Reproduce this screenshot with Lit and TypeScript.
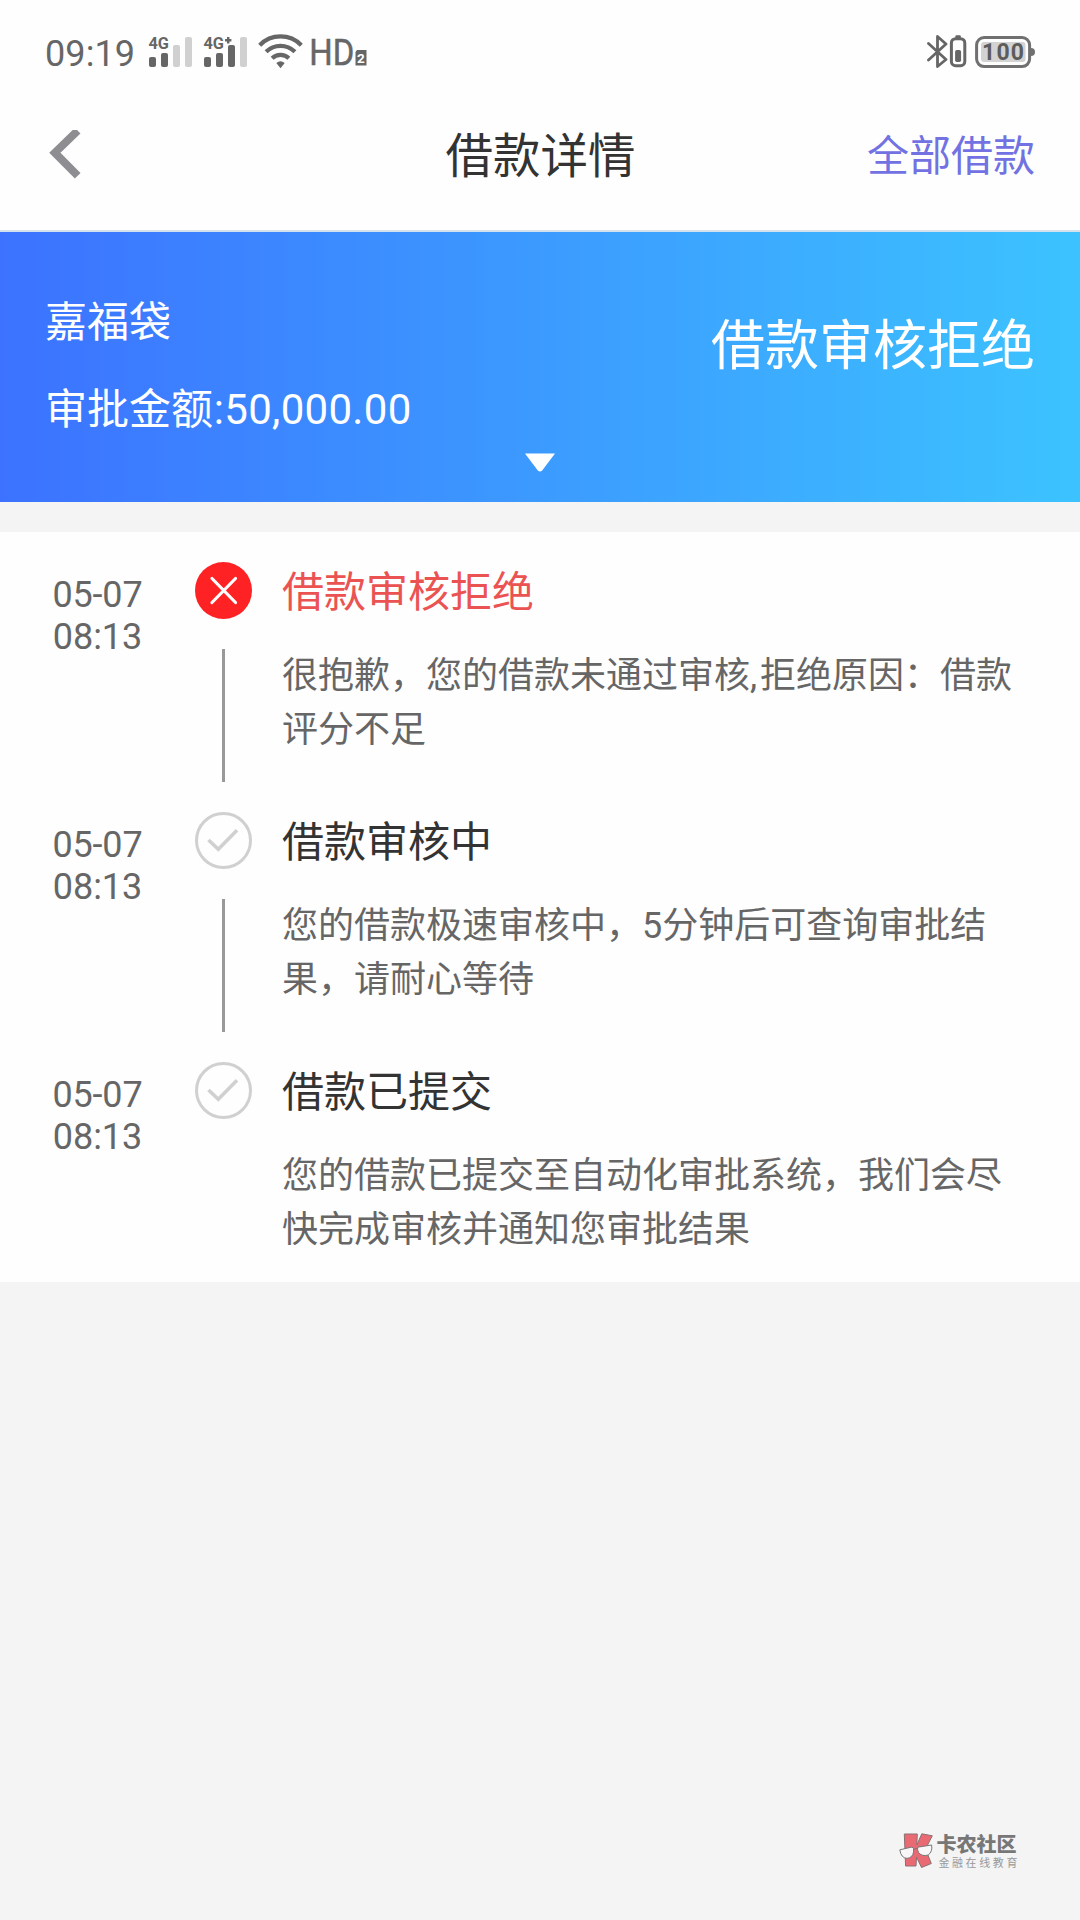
import { LitElement, html, css, svg } from "lit";
import { customElement, property } from "lit/decorators.js";
import { classMap } from "lit/directives/class-map.js";

interface Step {
  date: string;
  time: string;
  title: string;
  detail: string;
  rejected: boolean;
}

const STEPS: Step[] = [
  {
    date: "05-07",
    time: "08:13",
    title: "借款审核拒绝",
    detail: "很抱歉，您的借款未通过审核,拒绝原因：借款评分不足",
    rejected: true,
  },
  {
    date: "05-07",
    time: "08:13",
    title: "借款审核中",
    detail: "您的借款极速审核中，5分钟后可查询审批结果，请耐心等待",
    rejected: false,
  },
  {
    date: "05-07",
    time: "08:13",
    title: "借款已提交",
    detail: "您的借款已提交至自动化审批系统，我们会尽快完成审核并通知您审批结果",
    rejected: false,
  },
];

@customElement("status-bar")
export class StatusBar extends LitElement {
  static styles = css`
    :host {
      display: flex;
      justify-content: space-between;
      height: 104px;
      color: #666;
      font-family: Roboto, "Noto Sans CJK SC", sans-serif;
    }
    .left,
    .right {
      display: flex;
      align-items: flex-start;
      padding-top: 32px;
    }
    .left {
      padding-left: 45px;
    }
    .right {
      padding-right: 44px;
      gap: 8px;
    }
    .clock {
      width: 103px;
      padding-top: 1px;
      font-size: 36px;
      line-height: 42px;
      letter-spacing: 0.1px;
    }
    svg {
      display: block;
      flex: none;
      font-family: Roboto, sans-serif;
    }
  `;

  private signal(levels: number, plus: boolean) {
    const tops = [25, 21, 13, 5];
    return html`<svg width="55" height="40" viewBox="0 0 55 40">
      <text x="0.5" y="16.8" font-size="16.5" font-weight="700" fill="#666" textLength="20.5" lengthAdjust="spacingAndGlyphs">4G</text>
      ${plus ? svg`<path d="M25.2 5v6.4M22 8.2h6.4" stroke="#666" stroke-width="2.4" />` : null}
      ${tops.map(
        (top, i) => svg`<rect x=${1 + i * 12} y=${top} width="7" height=${35 - top} rx="2"
          fill=${i < levels ? "#666" : "#d0d0d0"} />`
      )}
    </svg>`;
  }

  render() {
    return html`
      <div class="left">
        <span class="clock">09:19</span>
        ${this.signal(2, false)}${this.signal(3, true)}
        <svg width="49" height="40" viewBox="0.5 0 49 40">
          <g fill="none" stroke="#666" stroke-width="4.2">
            <path d="M2.2 13.2A29 29 0 0 1 43.8 13.2" />
            <path d="M8.6 19.8A20.5 20.5 0 0 1 37.4 19.8" />
            <path d="M14.6 26.2A12.4 12.4 0 0 1 31.4 26.2" />
          </g>
          <path d="M18.8 31Q23 27.6 27.2 31L23 36.2z" fill="#666" />
        </svg>
        <svg width="64" height="48" viewBox="-4 0 64 48">
          <text x="-1.8" y="33.4" font-size="36" fill="#666" stroke="#666" stroke-width="0.5" textLength="45" lengthAdjust="spacingAndGlyphs">HD</text>
          <path d="M46 18H55.5v15.5H44.5V20z" fill="#666" />
          <text x="46.1" y="30.8" font-size="13.5" font-weight="700" fill="#fff">2</text>
        </svg>
      </div>
      <div class="right">
        <svg width="40" height="40" viewBox="0 0 40 40">
          <path d="M1.5 11.5L19 27.5 10.5 34.5V4.5L19 12 1.5 28" fill="none" stroke="#666" stroke-width="2.8" stroke-linejoin="round" stroke-linecap="round" />
          <rect x="24.4" y="6.7" width="13.4" height="27" rx="4.2" fill="none" stroke="#666" stroke-width="3" />
          <rect x="28.4" y="3.2" width="5.4" height="3" rx="1" fill="#666" />
          <rect x="28.1" y="18" width="6" height="12" rx="1.8" fill="#666" />
        </svg>
        <svg width="61" height="40" viewBox="0 0 61 40">
          <rect x="1.6" y="5.6" width="53" height="29" rx="7.5" fill="none" stroke="#707070" stroke-width="3" />
          <path d="M56 16a4 4 0 0 1 0 8z" fill="#707070" />
          <rect x="6" y="10" width="44.5" height="20" rx="3" fill="#d3d3d3" />
          <text x="7" y="28.2" font-size="23" font-weight="700" fill="#5c5c5c" textLength="42">100</text>
        </svg>
      </div>
    `;
  }
}

@customElement("progress-step")
export class ProgressStep extends LitElement {
  @property({ attribute: false }) step!: Step;
  @property({ type: Boolean }) last = false;

  static styles = css`
    :host {
      display: grid;
      grid-template-columns: 195px 57px 1fr;
      height: 250px;
      box-sizing: border-box;
      padding-right: 45px;
    }
    .when {
      padding-top: 42px;
      text-align: center;
      font-size: 36px;
      line-height: 42px;
      color: #666;
    }
    .day {
      letter-spacing: -0.2px;
    }
    .rail {
      display: flex;
      flex-direction: column;
      align-items: center;
      padding-top: 30px;
    }
    .rail svg {
      display: block;
      flex: none;
    }
    .line {
      flex: 1;
      width: 3px;
      margin-top: 30px;
      background: #999;
    }
    .body {
      padding: 36px 0 0 30px;
    }
    .title {
      font-size: 42px;
      line-height: 50px;
      color: #333;
    }
    .title.rejected {
      color: #eb5353;
    }
    .detail {
      margin-top: 31px;
      font-size: 36px;
      line-height: 54px;
      color: #666;
    }
    .comma {
      letter-spacing: 3px;
    }
  `;

  render() {
    const { date, time, title, detail, rejected } = this.step;
    return html`
      <div class="when"><div class="day">${date}</div><div>${time}</div></div>
      <div class="rail">
        ${rejected
          ? html`<svg width="57" height="57" viewBox="0 0 57 57">
              <circle cx="28.5" cy="28.5" r="28.5" fill="#ff2224" />
              <path d="M17 16.5l23.5 24M40.5 16.5L17 40.5" stroke="#fff" stroke-width="3.2" stroke-linecap="round" />
            </svg>`
          : html`<svg width="57" height="57" viewBox="0 0 57 57" fill="none" stroke="#d0d0d0" stroke-width="3">
              <circle cx="28.5" cy="28.5" r="27" />
              <path d="M13.5 28L23.3 37.2 42 18.3" stroke-width="3.6" />
            </svg>`}
        ${this.last ? null : html`<div class="line"></div>`}
      </div>
      <div class="body">
        <div class=${classMap({ title: true, rejected })}>${title}</div>
        <div class="detail">${detail
          .split(",")
          .map((part, i) => (i ? html`<span class="comma">,</span>${part}` : part))}</div>
      </div>
    `;
  }
}

@customElement("app-root")
export class AppRoot extends LitElement {
  static styles = css`
    :host {
      display: flex;
      flex-direction: column;
      width: 1080px;
      height: 1920px;
      background: #f4f4f4;
      font-family: Roboto, "Noto Sans CJK SC", sans-serif;
    }
    .top {
      background: #fefefe;
      height: 232px;
      box-sizing: border-box;
      border-bottom: 2px solid #d3e2ec;
    }
    .nav {
      display: grid;
      grid-template-columns: 1fr auto 1fr;
      align-items: center;
      height: 105px;
      padding: 0 45px 0 46px;
    }
    .nav svg {
      display: block;
    }
    .heading {
      font-size: 47.5px;
      line-height: 60px;
      color: #333;
    }
    .all {
      justify-self: end;
      font-size: 42px;
      line-height: 60px;
      color: #7272e2;
    }
    .banner {
      display: flex;
      flex-direction: column;
      height: 270px;
      color: #fff;
      background: linear-gradient(90deg, #3c72ff, #3cc3ff);
    }
    .summary {
      display: flex;
      justify-content: space-between;
      box-sizing: border-box;
      padding: 61px 45px 0;
      height: 221px;
    }
    .loan {
      font-size: 42px;
      line-height: 60px;
    }
    .loan div + div {
      margin-top: 27px;
    }
    .amount {
      margin-left: 0.8px;
      letter-spacing: 0.3px;
    }
    .result {
      padding-top: 21px;
      font-size: 54px;
      line-height: 66px;
    }
    .arrow {
      display: block;
      align-self: center;
    }
    .steps {
      margin-top: 30px;
      background: #fefefe;
    }
    .brand {
      display: flex;
      align-self: flex-end;
      margin: auto 60px 50px 0;
      gap: 3px;
      font-family: "Noto Sans CJK SC", sans-serif;
    }
    .brand-name {
      font-size: 20px;
      line-height: 22px;
      font-weight: 900;
      color: #777;
    }
    .brand-sub {
      padding-left: 2px;
      font-size: 11px;
      line-height: 15px;
      letter-spacing: 2.6px;
      color: #999;
    }
  `;

  render() {
    return html`
      <div class="top">
        <status-bar></status-bar>
        <nav class="nav">
          <svg width="36" height="54" viewBox="-2 0 36 54">
            <path d="M30.2 .5L7.4 22.5 30.2 45.5" fill="none" stroke="#8e8e92" stroke-width="8" transform="translate(-.5 .2)" />
          </svg>
          <div class="heading">借款详情</div>
          <div class="all">全部借款</div>
        </nav>
      </div>
      <section class="banner">
        <div class="summary">
          <div class="loan">
            <div>嘉福袋</div>
            <div>审批金额<span class="amount">:50,000.00</span></div>
          </div>
          <div class="result">借款审核拒绝</div>
        </div>
        <svg class="arrow" width="30" height="19" viewBox="0 0 30 19">
          <path d="M0 0.6H30L17.2 17.6Q15 19.6 12.8 17.6z" fill="#fff" />
        </svg>
      </section>
      <section class="steps">
        ${STEPS.map(
          (step, i) => html`<progress-step .step=${step} ?last=${i === STEPS.length - 1}></progress-step>`
        )}
      </section>
      <footer class="brand">
        <svg width="34" height="37" viewBox="0 0 34 37">
          <path d="M5.3 1H18.3L17.8 12 22.8 .8 33.3 2.8 26.5 16 32.3 30.5 22.5 34.5 17.5 24 17 33H6.6z" fill="#ea6a74" stroke="#8a7072" stroke-linejoin="round" />
          <g fill="#f8f6f6" stroke="#777" stroke-width="1">
            <path d="M.8 16.8L13 14Q15.2 14.7 14.6 19 13.4 25 8 25.4 2 25 .8 16.8z" />
            <path d="M18.6 14.2L32.6 12Q33.8 18.6 29.2 22 23 23.8 19.6 19.6 18.2 17 18.6 14.2z" />
            <path d="M14.6 16.2L18.6 15.4" />
          </g>
        </svg>
        <div>
          <div class="brand-name">卡农社区</div>
          <div class="brand-sub">金融在线教育</div>
        </div>
      </footer>
    `;
  }
}
